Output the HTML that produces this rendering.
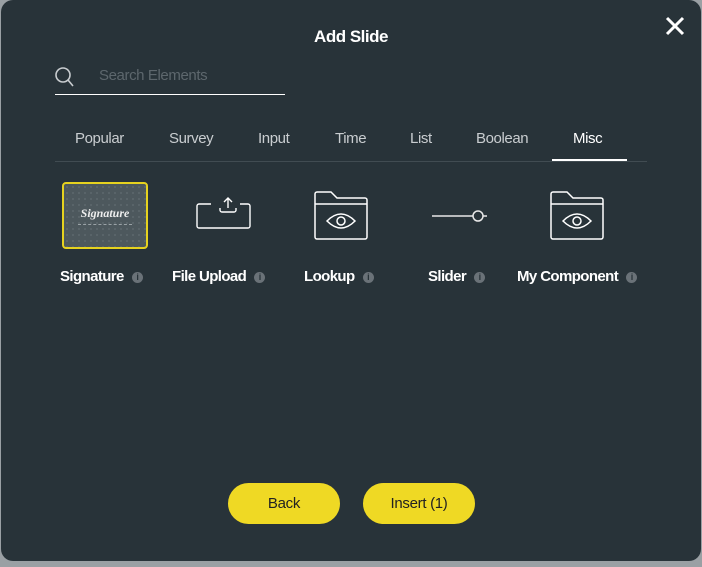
<!DOCTYPE html>
<html><head><style>
body{margin:0;width:702px;height:567px;background:#9aa0a4;position:relative;overflow:hidden;font-family:"Liberation Sans",sans-serif}
.dlg{position:absolute;left:1px;top:0;width:700px;height:561px;background:#283339;border-radius:12px}
.t{position:absolute;color:#fff}
.tab{position:absolute;top:130px;font-size:15px;color:#c9cdd0;letter-spacing:-0.4px}
.lbl{position:absolute;top:268px;font-size:15px;font-weight:bold;color:#fff;letter-spacing:-0.6px;white-space:nowrap}
.i{display:inline-block;width:11px;height:11px;border-radius:50%;background:#6a7278;color:#283339;font-size:9px;text-align:center;line-height:11px;margin-left:8px;vertical-align:1px;font-weight:bold}
.btn{position:absolute;top:483px;width:112px;height:41px;border-radius:21px;background:#efd924;color:#222;font-size:15px;text-align:center;line-height:42px;letter-spacing:-0.3px}
</style></head><body>
<div class="dlg"></div>
<div class="t" style="left:0;width:702px;top:27px;text-align:center;font-size:17px;font-weight:bold;letter-spacing:-0.5px">Add Slide</div>
<svg style="position:absolute;left:664px;top:15px" width="22" height="22"><path d="M3 3L19 19M19 3L3 19" stroke="#fff" stroke-width="3"/></svg>
<svg style="position:absolute;left:53px;top:66px" width="24" height="24"><circle cx="10" cy="9" r="7" fill="none" stroke="#c9cdd0" stroke-width="1.6"/><path d="M15 14L20 20" stroke="#c9cdd0" stroke-width="1.6"/></svg>
<div class="t" style="left:99px;top:67px;font-size:15px;color:#5d676d;letter-spacing:-0.4px">Search Elements</div>
<div style="position:absolute;left:55px;top:94px;width:230px;height:1px;background:#fff"></div>
<div class="tab" style="left:75px">Popular</div>
<div class="tab" style="left:169px">Survey</div>
<div class="tab" style="left:258px">Input</div>
<div class="tab" style="left:335px">Time</div>
<div class="tab" style="left:410px">List</div>
<div class="tab" style="left:476px">Boolean</div>
<div class="tab" style="left:573px;color:#fff">Misc</div>
<div style="position:absolute;left:55px;top:161px;width:592px;height:1px;background:#414c52"></div>
<div style="position:absolute;left:552px;top:159px;width:75px;height:2px;background:#fff"></div>
<div style="position:absolute;left:62px;top:182px;width:82px;height:63px;border:2px solid #e6d21f;border-radius:4px;background:#4d585d;background-image:radial-gradient(#5d686d 1px,transparent 1px);background-size:6px 6px"></div>
<div class="t" style="left:62px;top:206px;width:86px;text-align:center;font-family:'Liberation Serif',serif;font-style:italic;font-weight:bold;font-size:12px;color:#eee">Signature</div>
<div style="position:absolute;left:78px;top:224px;width:54px;border-top:1px dashed #9aa2a6"></div>
<svg style="position:absolute;left:190px;top:195px" width="66" height="40" fill="none" stroke="#fff" stroke-width="1.4"><path d="M21 9H9a2 2 0 0 0-2 2v20a2 2 0 0 0 2 2h49a2 2 0 0 0 2-2V11a2 2 0 0 0-2-2H50"/><path d="M30 13v2a2 2 0 0 0 2 2h12a2 2 0 0 0 2-2v-2M38 3v10M34 7l4-4 4 4"/></svg>
<svg style="position:absolute;left:312px;top:190px" width="58" height="52" fill="none" stroke="#fff" stroke-width="1.5"><path d="M3 47V4a2 2 0 0 1 2-2h14l6 6h28a2 2 0 0 1 2 2v37a2 2 0 0 1-2 2H5a2 2 0 0 1-2-2zM3 14h52"/><path d="M15 31q14-14 28 0q-14 14-28 0z"/><circle cx="29" cy="31" r="4"/></svg>
<svg style="position:absolute;left:430px;top:208px" width="60" height="16" fill="none" stroke="#e8e8e8" stroke-width="1.5"><path d="M2 8H43M53 8h4"/><circle cx="48" cy="8" r="5"/></svg>
<svg style="position:absolute;left:548px;top:190px" width="58" height="52" fill="none" stroke="#fff" stroke-width="1.5"><path d="M3 47V4a2 2 0 0 1 2-2h14l6 6h28a2 2 0 0 1 2 2v37a2 2 0 0 1-2 2H5a2 2 0 0 1-2-2zM3 14h52"/><path d="M15 31q14-14 28 0q-14 14-28 0z"/><circle cx="29" cy="31" r="4"/></svg>
<div class="lbl" style="left:60px">Signature<span class="i">i</span></div>
<div class="lbl" style="left:172px">File Upload<span class="i">i</span></div>
<div class="lbl" style="left:304px">Lookup<span class="i">i</span></div>
<div class="lbl" style="left:428px">Slider<span class="i">i</span></div>
<div class="lbl" style="left:517px">My Component<span class="i">i</span></div>
<div class="btn" style="left:228px">Back</div>
<div class="btn" style="left:363px">Insert (1)</div>
</body></html>
